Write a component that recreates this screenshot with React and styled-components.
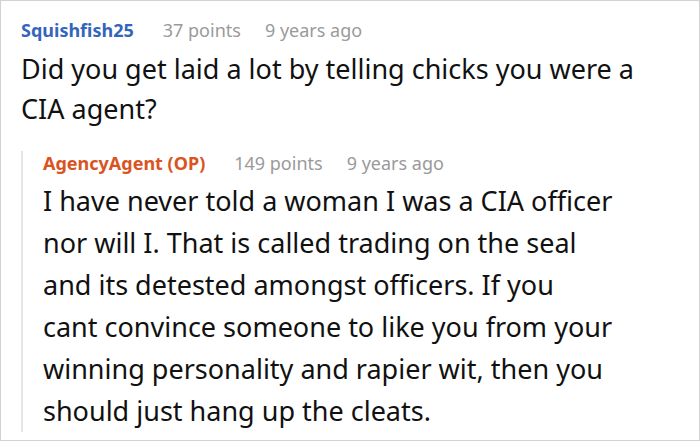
import React from "react";
import styled, { createGlobalStyle } from "styled-components";

const GlobalStyle = createGlobalStyle`
  html, body {
    margin: 0;
    padding: 0;
    background: #fff;
  }
  * {
    box-sizing: border-box;
  }
`;

const Frame = styled.div`
  width: 700px;
  height: 441px;
  border: 1px solid #d2d2d2;
  padding: 17px 39px 0 20px;
  overflow: hidden;
  font-family: "Noto Sans", "Open Sans", sans-serif;
  color: #111;
`;

const Comment = styled.div`
  display: flex;
  flex-direction: column;
`;

const Meta = styled.div`
  display: flex;
  align-items: baseline;
  gap: 24px;
  font-size: 18px;
  line-height: 24px;
  color: #9a9a9a;
  white-space: nowrap;
`;

const Author = styled.span`
  font-weight: 700;
  margin-right: 5px;
  color: ${(props) => (props.$op ? "#d9541f" : "#3366bb")};
`;

const Body = styled.p`
  margin: ${(props) => (props.$reply ? "5px 0 0" : "7px 0 0")};
  font-size: 27px;
  line-height: ${(props) => (props.$reply ? "42px" : "40px")};
`;

const Reply = styled.div`
  margin: 22px 10px 0 0;
  border-left: 2px solid #e6e6e6;
  padding-left: 20px;
`;

export default function App() {
  return (
    <>
      <GlobalStyle />
      <Frame>
        <Comment>
          <Meta>
            <Author>Squishfish25</Author>
            <span>37 points</span>
            <span>9 years ago</span>
          </Meta>
          <Body>
            Did you get laid a lot by telling chicks you were a CIA agent?
          </Body>
        </Comment>
        <Reply>
          <Meta>
            <Author $op>AgencyAgent (OP)</Author>
            <span>149 points</span>
            <span>9 years ago</span>
          </Meta>
          <Body $reply>
            I have never told a woman I was a CIA officer
            <br />
            nor will I. That is called trading on the seal
            <br />
            and its detested amongst officers. If you
            <br />
            cant convince someone to like you from your
            <br />
            winning personality and rapier wit, then you
            <br />
            should just hang up the cleats.
          </Body>
        </Reply>
      </Frame>
    </>
  );
}
